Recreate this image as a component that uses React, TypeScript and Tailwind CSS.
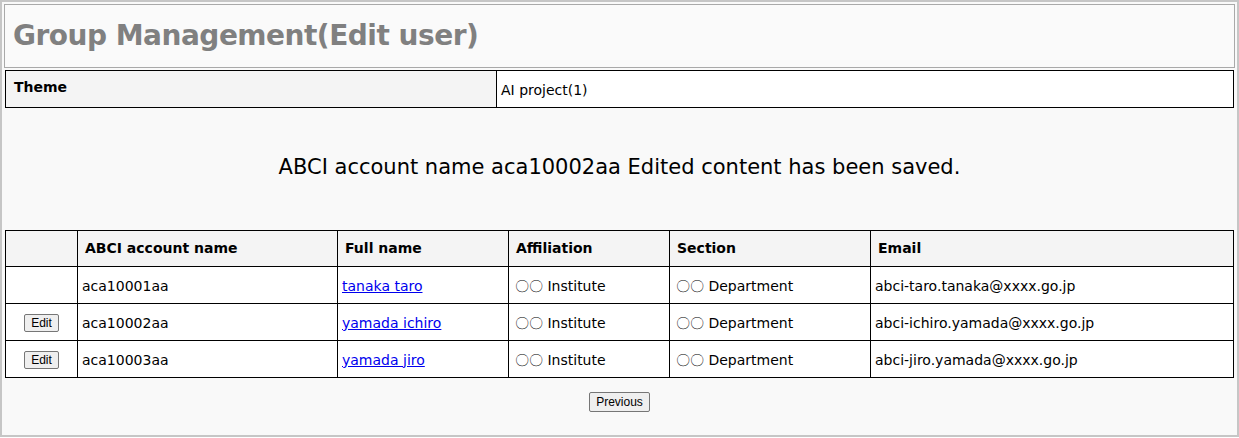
import React from "react";

const rows = [
  { edit: false, account: "aca10001aa", name: "tanaka taro", email: "abci-taro.tanaka@xxxx.go.jp" },
  { edit: true, account: "aca10002aa", name: "yamada ichiro", email: "abci-ichiro.yamada@xxxx.go.jp" },
  { edit: true, account: "aca10003aa", name: "yamada jiro", email: "abci-jiro.yamada@xxxx.go.jp" },
];

const App = () => {
  return (
    <div
      className="h-[437px] w-[1239px] border-2 border-[#c6c6c6] bg-[#f9f9f9] p-[2px] text-[14px] text-black"
      style={{ fontFamily: '"DejaVu Sans", Verdana, sans-serif' }}
    >
      <div className="flex h-[64px] items-center border border-[#a9a9a9] bg-[#fafafa] px-[8px]">
        <h1 className="text-[28px] font-bold tracking-[-0.5px] text-[#808080]">Group Management(Edit user)</h1>
      </div>

      <div className="pl-[1px] pr-[1px]">
        <table className="mt-[2px] w-full border-collapse">
          <tbody>
            <tr className="h-[37px]">
              <th className="w-[491px] border border-black bg-[#f4f4f4] px-[8px] pb-[4px] text-left text-[14px] font-bold">
                Theme
              </th>
              <td className="border border-black bg-white px-[4px] pt-[2px] text-[14px]">AI project(1)</td>
            </tr>
          </tbody>
        </table>

        <div className="flex h-[122px] items-center justify-center pb-[2px] text-[21px]">
          ABCI account name aca10002aa Edited content has been saved.
        </div>

        <table className="w-full border-collapse">
          <thead>
            <tr className="h-[36px] bg-[#f4f4f4] text-left text-[14px] font-bold">
              <th className="w-[72px] border border-black"></th>
              <th className="w-[260px] border border-black px-[7px] font-bold">ABCI account name</th>
              <th className="w-[171px] border border-black px-[7px] font-bold">Full name</th>
              <th className="w-[161px] border border-black px-[7px] font-bold">Affiliation</th>
              <th className="w-[201px] border border-black px-[7px] font-bold">Section</th>
              <th className="border border-black px-[7px] font-bold">Email</th>
            </tr>
          </thead>
          <tbody>
            {rows.map((r) => (
              <tr key={r.account} className="h-[37px] bg-white">
                <td className="border border-black text-center">
                  {r.edit && (
                    <button
                      className="h-[18px] rounded-[2px] border border-[#767676] bg-[#efefef] px-[6px] text-[12px] leading-none"
                      style={{ fontFamily: '"Liberation Sans", Arial, sans-serif' }}
                    >
                      Edit
                    </button>
                  )}
                </td>
                <td className="border border-black px-[4px] pt-[2px]">{r.account}</td>
                <td className="border border-black px-[4px] pt-[2px]">
                  <a href="#" className="text-[#0000ee] underline">
                    {r.name}
                  </a>
                </td>
                <td className="border border-black px-[6px] pt-[2px]">〇〇 Institute</td>
                <td className="border border-black px-[6px] pt-[2px]">〇〇 Department</td>
                <td className="border border-black px-[4px] pt-[2px]">{r.email}</td>
              </tr>
            ))}
          </tbody>
        </table>

        <div className="flex justify-center pt-[14px]">
          <button
            className="h-[20px] rounded-[2px] border border-[#767676] bg-[#efefef] px-[6px] text-[12px] leading-none"
            style={{ fontFamily: '"Liberation Sans", Arial, sans-serif' }}
          >
            Previous
          </button>
        </div>
      </div>
    </div>
  );
};

export default App;
